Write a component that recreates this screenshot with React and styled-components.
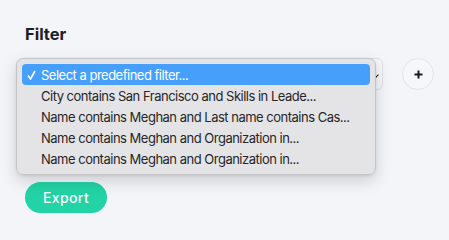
import React from "react";
import styled, { createGlobalStyle } from "styled-components";

const Global = createGlobalStyle`
  html, body { margin: 0; padding: 0; background: #f4f5f9; }
  body { font-family: Inter, "Noto Sans", sans-serif; }
`;

const Page = styled.div`
  position: relative;
  width: 449px;
  height: 240px;
  padding: 24px 0 0 25px;
  box-sizing: border-box;
`;

const Title = styled.h2`
  margin: 0;
  font-size: 16.5px;
  line-height: 20px;
  font-weight: 700;
  color: #1f2023;
`;

const Row = styled.div`
  display: flex;
  align-items: center;
  gap: 19px;
  margin-top: 14px;
`;

const SelectBox = styled.div`
  position: relative;
  width: 358px;
  height: 32px;
  box-sizing: border-box;
  border: 1px solid #e0e1e6;
  border-radius: 6px;
  background: #f7f7f9;
`;

const Chevron = styled.span`
  position: absolute;
  right: 4px;
  top: 14px;
  width: 3px;
  height: 3px;
  border-right: 1.5px solid #222;
  border-bottom: 1.5px solid #222;
  transform: rotate(45deg);
`;

const PlusButton = styled.button`
  width: 32px;
  height: 32px;
  border-radius: 50%;
  border: 1px solid #e3e4ea;
  background: #f6f7fa;
  display: flex;
  align-items: center;
  justify-content: center;
  padding: 0;
`;

const ExportButton = styled.button`
  margin-top: 92px;
  width: 82px;
  height: 31px;
  border: none;
  border-radius: 16px;
  background: #22d3a5;
  color: #fff;
  font-family: Inter, "Open Sans", sans-serif;
  font-size: 14px;
  font-weight: 500;
  letter-spacing: 0.4px;
  padding: 0;
`;

const Menu = styled.ul`
  position: absolute;
  left: 16px;
  top: 58px;
  width: 360px;
  box-sizing: border-box;
  margin: 0;
  padding: 5px 5px 5px;
  list-style: none;
  background: rgba(227, 227, 229, 0.97);
  border: 1px solid #c4c4c6;
  border-radius: 7px;
  box-shadow: 0 6px 16px rgba(0, 0, 0, 0.16), 0 1px 3px rgba(0, 0, 0, 0.08);
`;

const Item = styled.li`
  display: flex;
  align-items: center;
  height: 21px;
  padding-left: 5px;
  border-radius: 4px;
  font-family: Inter, "Noto Sans", sans-serif;
  font-size: 13px;
  letter-spacing: -0.5px;
  color: ${(p) => (p.$active ? "#fff" : "#262628")};
  background: ${(p) => (p.$active ? "#479ffc" : "transparent")};
`;

const Check = styled.span`
  display: inline-flex;
  width: 14px;
`;

const options = [
  "Select a predefined filter...",
  "City contains San Francisco and Skills in Leade...",
  "Name contains Meghan and Last name contains Cas...",
  "Name contains Meghan and Organization in...",
  "Name contains Meghan and Organization in...",
];

export default function App() {
  return (
    <>
      <Global />
      <Page>
        <Title>Filter</Title>
        <Row>
          <SelectBox>
            <Chevron />
          </SelectBox>
          <PlusButton aria-label="Add">
            <svg width="9" height="9" viewBox="0 0 9 9">
              <path d="M4.5 0.5v8M0.5 4.5h8" stroke="#1b1b1d" strokeWidth="2" />
            </svg>
          </PlusButton>
        </Row>
        <ExportButton>Export</ExportButton>
        <Menu>
          {options.map((o, i) => (
            <Item key={i} $active={i === 0}>
              <Check>
                {i === 0 && (
                  <svg width="9" height="10" viewBox="0 0 9 10">
                    <path d="M1 5.5l2.5 3.5L8 1" fill="none" stroke="#fff" strokeWidth="1.6" />
                  </svg>
                )}
              </Check>
              {o}
            </Item>
          ))}
        </Menu>
      </Page>
    </>
  );
}
